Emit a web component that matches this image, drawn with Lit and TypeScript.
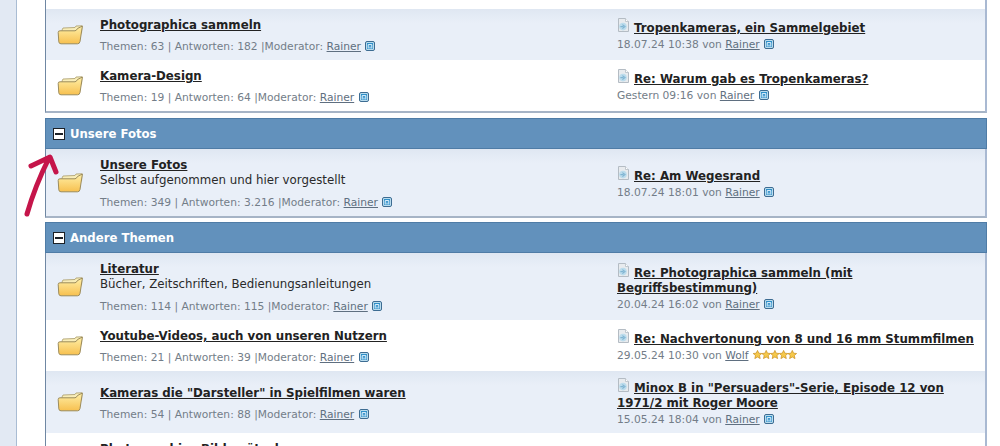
import { LitElement, html, css, svg } from 'lit';
import { customElement } from 'lit/decorators.js';

type Row = {
  title: string;
  desc?: string;
  themes?: string;
  answers?: string;
  last?: string;
  date?: string;
  user?: string;
};

const sectionOne: Row[] = [
  { title: 'Photographica sammeln', themes: '63', answers: '182', last: 'Tropenkameras, ein Sammelgebiet', date: '18.07.24 10:38' },
  { title: 'Kamera-Design', themes: '19', answers: '64', last: 'Re: Warum gab es Tropenkameras?', date: 'Gestern 09:16' },
];

const sectionTwo: Row[] = [
  { title: 'Unsere Fotos', desc: 'Selbst aufgenommen und hier vorgestellt', themes: '349', answers: '3.216', last: 'Re: Am Wegesrand', date: '18.07.24 18:01' },
];

const sectionThree: Row[] = [
  { title: 'Literatur', desc: 'Bücher, Zeitschriften, Bedienungsanleitungen', themes: '114', answers: '115', last: 'Re: Photographica sammeln (mit Begriffsbestimmung)', date: '20.04.24 16:02' },
  { title: 'Youtube-Videos, auch von unseren Nutzern', themes: '21', answers: '39', last: 'Re: Nachvertonung von 8 und 16 mm Stummfilmen', date: '29.05.24 10:30', user: 'Wolf' },
  { title: 'Kameras die "Darsteller" in Spielfilmen waren', themes: '54', answers: '88', last: 'Minox B in "Persuaders"-Serie, Episode 12 von 1971/2 mit Roger Moore', date: '15.05.24 18:04' },
  { title: 'Photographica Bilderrätsel' },
];

const folderIcon = svg`<svg width="26" height="20" viewBox="0 0 26 20">
  <defs>
    <linearGradient id="fold" x1="0" y1="0" x2="0" y2="1">
      <stop offset="0" stop-color="#fff0a8" />
      <stop offset="1" stop-color="#f7c04f" />
    </linearGradient>
  </defs>
  <path d="M5 5 L6 3 L18 2.5 L19 1 L25 .8 L24.5 8 L5 8 Z" fill="#f8edb8" stroke="#a89a6a" stroke-width=".8" />
  <path d="M1.2 7.5 Q1 5.8 3 5.8 L18 5.8 Q19.5 5.6 20.5 3.5 L25.4 1 L23 16.5 Q22.6 18.8 20.5 18.8 L4 18.8 Q2 18.8 1.8 16.8 Z" fill="url(#fold)" stroke="#9c8c5c" stroke-width="1" />
</svg>`;

const postIcon = svg`<svg width="13" height="14" viewBox="0 0 13 14">
  <path d="M1.5 .5 H8.5 L11.5 3.5 V13.5 H1.5 Z" fill="#e8ebee" stroke="#b4bcc4" />
  <path d="M8.5 .5 V3.5 H11.5" fill="#fff" stroke="#b4bcc4" stroke-width=".8" />
  <circle cx="6" cy="8.6" r="3.8" fill="#bcdcec" />
  <path d="M3.4 8.6 H6.6 M5.4 6.6 L8 8.6 L5.4 10.6" fill="none" stroke="#7fb4d2" stroke-width="1.1" />
</svg>`;

const userIcon = svg`<svg class="badge" width="10" height="10" viewBox="0 0 10 10">
  <rect x=".5" y=".5" width="9" height="9" rx="1.5" fill="#b9dcee" stroke="#3d6c92" />
  <rect x="2" y="2" width="6" height="6" fill="#2f8fc8" />
  <path d="M3.2 7.6 V3.6 H6.8 V7.6 M5 7.6 V5.6" fill="none" stroke="#e8f6ff" stroke-width="1" />
</svg>`;

const star = (x: number) => svg`<path transform="translate(${x} 0)"
  d="M4.5 .4 L5.8 3.2 L8.8 3.5 L6.5 5.5 L7.2 8.6 L4.5 7 L1.8 8.6 L2.5 5.5 L.2 3.5 L3.2 3.2 Z"
  fill="#f6c94a" stroke="#c98d1c" stroke-width=".7" />`;

const stars = svg`<svg class="stars" width="44" height="9" viewBox="0 0 44 9">${[0, 8.7, 17.4, 26.1, 34.8].map(star)}</svg>`;

@customElement('app-root')
export class AppRoot extends LitElement {
  static styles = css`
    :host {
      display: block;
      height: 446px;
      overflow: hidden;
      background: #fff;
      font-family: 'DejaVu Sans', Verdana, sans-serif;
      color: #222;
    }

    .page {
      display: flex;
      height: 446px;
    }

    .strip {
      width: 16px;
      flex: none;
      background: #e2e9f3;
      border-right: 1px solid #a9bcd3;
    }

    .content {
      flex: 1;
      padding: 0 13px 0 28px;
      min-width: 0;
    }

    .section {
      border-left: 1px solid #6f87a3;
      border-right: 2px solid #a9b9d2;
      border-bottom: 2px solid #a6b4c6;
      margin-bottom: 4px;
    }

    .section.first {
      margin-bottom: 5px;
    }

    .spacer {
      height: 9px;
    }

    .head {
      display: flex;
      align-items: center;
      gap: 5px;
      height: 29px;
      padding-left: 7px;
      margin-left: -1px;
      margin-right: -2px;
      background: #6291bc;
      border: 1px solid #4f7ca6;
      color: #fff;
      font-size: 11.7px;
      font-weight: bold;
    }

    .toggle {
      width: 10px;
      height: 10px;
      border: 1.5px solid #1b2026;
      background: #fff;
      display: flex;
      align-items: center;
      justify-content: center;
      flex: none;
    }

    .toggle i {
      display: block;
      width: 8px;
      height: 2px;
      background: #1b2026;
    }

    .row {
      display: grid;
      grid-template-columns: 54px 517px 1fr;
      align-items: center;
      background: #fff;
    }

    .row.alt {
      background: linear-gradient(#dfe7f2, #e9eff8 14px);
    }

    .folder {
      padding-left: 11px;
      display: flex;
    }

    .forum {
      padding: 9px 0 6px;
    }

    .title {
      font-size: 11.8px;
      line-height: 15px;
      font-weight: bold;
      color: #222;
      text-decoration: underline;
    }

    .desc {
      font-size: 11.8px;
      line-height: 15px;
      color: #2a2a2a;
    }

    .desc + .meta {
      margin-top: 7px;
    }

    .meta {
      font-size: 10.7px;
      line-height: 15px;
      color: #737d88;
      white-space: nowrap;
    }

    .forum .meta {
      margin-top: 6px;
    }

    .forum .desc + .meta {
      margin-top: 7px;
    }

    .latest .meta {
      margin-top: 1px;
    }

    .meta a {
      color: #5f6f80;
      text-decoration: underline;
    }

    .badge {
      vertical-align: -1px;
      margin-left: 1px;
    }

    .stars {
      vertical-align: 0;
      margin-left: 1px;
    }

    .latest {
      padding: 7px 6px 6px 0;
    }

    .latest-title {
      font-size: 11.8px;
      line-height: 15px;
      font-weight: bold;
      color: #222;
      text-decoration: underline;
    }

    .latest-title svg {
      vertical-align: 0;
      margin-right: 4px;
      display: inline-block;
    }

    .arrow {
      position: absolute;
      left: 20px;
      top: 150px;
      pointer-events: none;
    }

    .wrap {
      position: relative;
    }
  `;

  renderRow(r: Row, alt: boolean) {
    return html`
      <div class="row ${alt ? 'alt' : ''}">
        <div class="folder">${r.themes ? folderIcon : ''}</div>
        <div class="forum">
          <div class="title">${r.title}</div>
          ${r.desc ? html`<div class="desc">${r.desc}</div>` : ''}
          ${r.themes
            ? html`<div class="meta">Themen: ${r.themes} | Antworten: ${r.answers} |Moderator: <a>Rainer</a> ${userIcon}</div>`
            : ''}
        </div>
        ${r.last
          ? html`<div class="latest">
              <div class="latest-title">${postIcon}${r.last}</div>
              <div class="meta">${r.date} von <a>${r.user ?? 'Rainer'}</a> ${r.user ? stars : userIcon}</div>
            </div>`
          : ''}
      </div>
    `;
  }

  renderHead(label: string) {
    return html`<div class="head"><span class="toggle"><i></i></span>${label}</div>`;
  }

  render() {
    return html`
      <div class="page wrap">
        <div class="strip"></div>
        <div class="content">
          <div class="section first">
            <div class="spacer"></div>
            ${sectionOne.map((r, i) => this.renderRow(r, i % 2 === 0))}
          </div>
          <div class="section">
            ${this.renderHead('Unsere Fotos')}
            ${sectionTwo.map((r) => this.renderRow(r, true))}
          </div>
          <div class="section">
            ${this.renderHead('Andere Themen')}
            ${sectionThree.map((r, i) => this.renderRow(r, i % 2 === 0))}
          </div>
        </div>
        <svg class="arrow" width="42" height="72" viewBox="0 0 42 72">
          <path d="M7 64 Q15 36 29 8 M11 16 L30 7 L36 22" fill="none" stroke="#c5154a" stroke-width="5" stroke-linecap="round" stroke-linejoin="round" />
        </svg>
      </div>
    `;
  }
}
